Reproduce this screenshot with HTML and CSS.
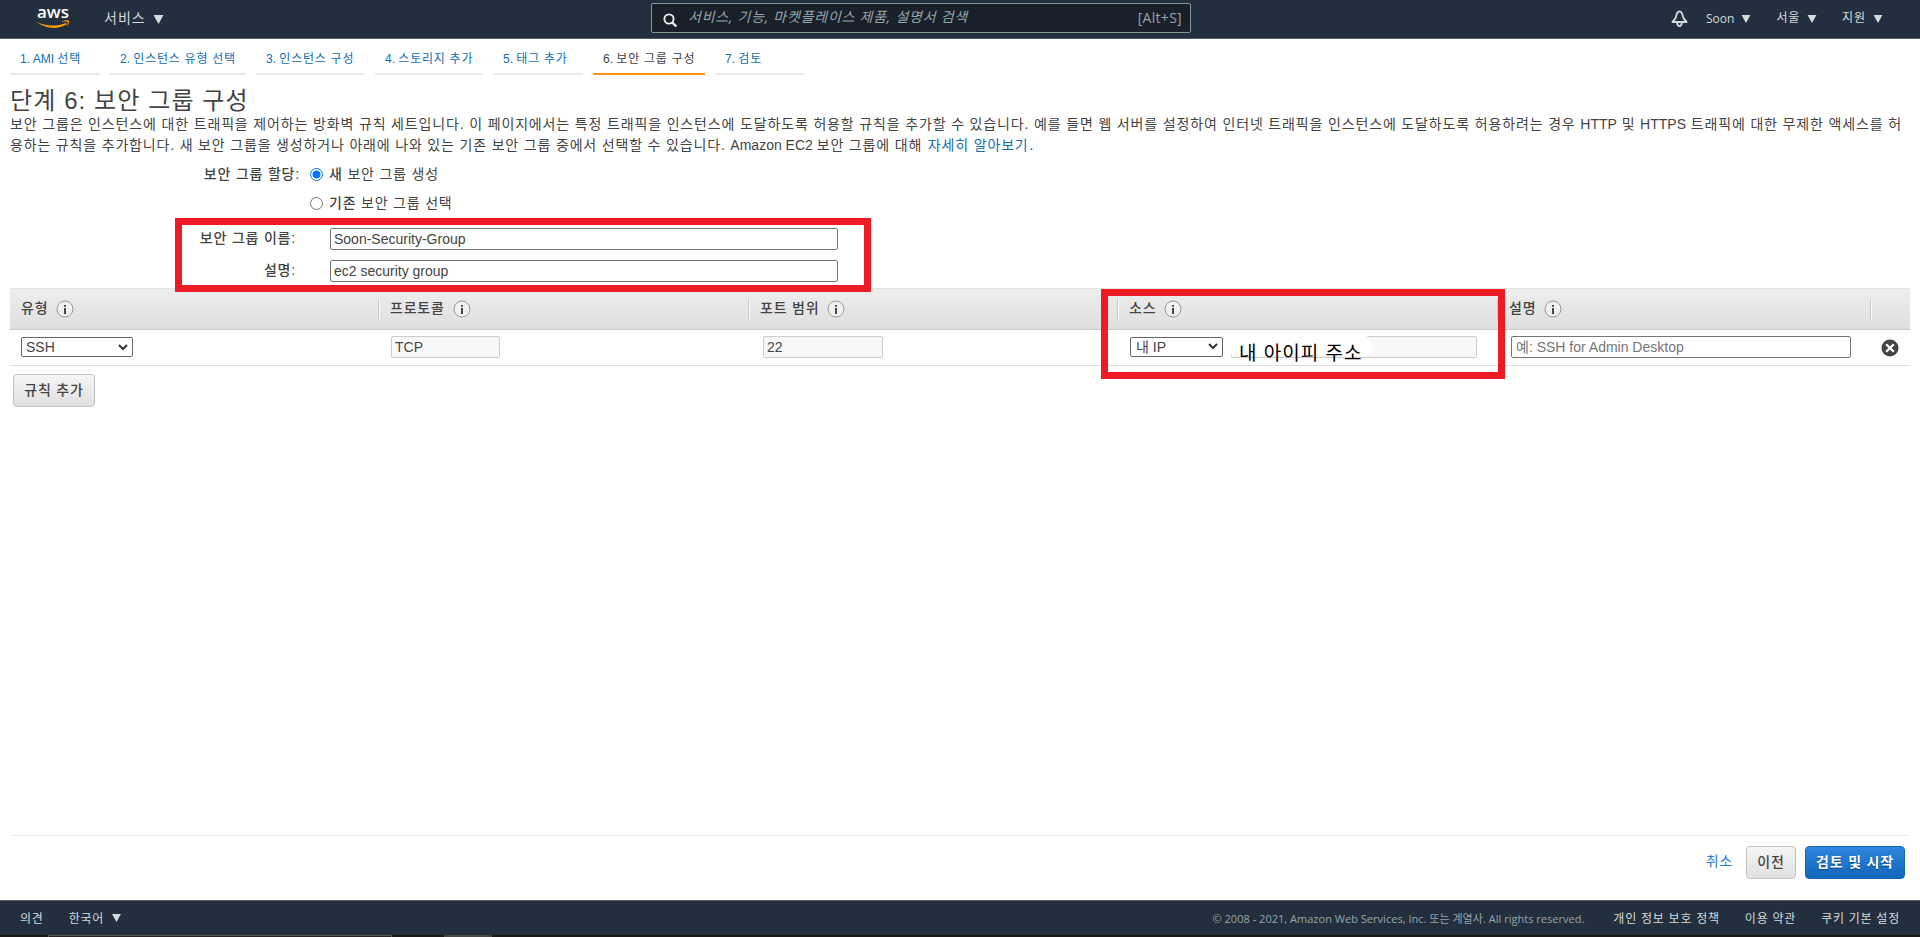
FILE: index.html
```html
<!DOCTYPE html>
<html lang="ko">
<head>
<meta charset="utf-8">
<title>보안 그룹 구성</title>
<link rel="stylesheet" href="styles.css">
</head>
<body>
<svg class="defs" aria-hidden="true">
  <symbol id="info" viewBox="0 0 18 18"><circle cx="9" cy="9" r="8" fill="#f0f0f0" stroke="#999"/><path d="M8 5h2v1.800H8zM8 8h2v6H8z" fill="#444"/></symbol>
  <symbol id="caret" viewBox="0 0 10 9"><path d="M0 0h10L5 9z" fill="currentColor"/></symbol>
  <symbol id="chevron" viewBox="0 0 10 7"><path d="M1 1l4 4 4-4" fill="none" stroke="#333" stroke-width="2"/></symbol>
</svg>
<header class="topbar">
  <div class="logo"><span class="logo-text">aws</span><svg class="smile" width="34" height="9" viewBox="0 0 34 9"><path d="M0 1.200C8 6 20 7.200 29.200 3.200 30.500 2.700 31.200 4 30 4.800 21 10 8.500 8.600 0 1.200z" fill="#f90"/><path d="M26 1.400C29 0 32.500-.1 33 .8 33.500 2 32.300 5.200 30.600 6.800 31.500 4.300 32.100 2.600 31.600 2 31 1.400 28.500 1.500 26 1.900z" fill="#f90"/></svg></div>
  <div class="services">서비스<svg width="11" height="9"><use href="#caret"/></svg></div>
  <div class="search">
    <svg class="lens" width="14" height="15" viewBox="0 0 14 15"><circle cx="6" cy="6" r="4.600" fill="none" stroke="#eee" stroke-width="1.900"/><path d="M9.200 9.500l4 4" stroke="#eee" stroke-width="2.400"/></svg>
    <span class="search-text">서비스, 기능, 마켓플레이스 제품, 설명서 검색</span><span class="shortcut">[Alt+S]</span>
  </div>
  <nav class="account">
    <svg class="bell" width="17" height="17" viewBox="0 0 17 17"><path d="M8.500 1.300C6.500 1.500 5.600 3.600 5.200 6.200 4.700 8.700 3 10 1.400 12h14.200C14 10 12.300 8.700 11.800 6.200 11.400 3.600 10.500 1.500 8.500 1.300z" fill="none" stroke="#d5dbdb" stroke-width="1.800" stroke-linejoin="round"/><path d="M6.200 12.500c0 4.700 4.600 4.700 4.600 0" fill="none" stroke="#d5dbdb" stroke-width="1.800"/></svg>
    <span class="menu soon">Soon<svg width="10" height="8"><use href="#caret"/></svg></span>
    <span class="menu">서울<svg width="10" height="8"><use href="#caret"/></svg></span>
    <span class="menu">지원<svg width="10" height="8"><use href="#caret"/></svg></span>
  </nav>
</header>
<main class="page">
  <nav class="tabs">
    <a class="tab w90"><i>1. AMI </i>선택</a><a class="tab w136"><i>2. </i>인스턴스 유형 선택</a><a class="tab w109"><i>3. </i>인스턴스 구성</a><a class="tab w108"><i>4. </i>스토리지 추가</a><a class="tab w90"><i>5. </i>태그 추가</a><a class="tab w112 active"><i>6. </i>보안 그룹 구성</a><a class="tab w90"><i>7. </i>검토</a>
  </nav>
  <h1>단계 6: 보안 그룹 구성</h1>
  <p class="intro">보안 그룹은 인스턴스에 대한 트래픽을 제어하는 방화벽 규칙 세트입니다. 이 페이지에서는 특정 트래픽을 인스턴스에 도달하도록 허용할 규칙을 추가할 수 있습니다. 예를 들면 웹 서버를 설정하여 인터넷 트래픽을 인스턴스에 도달하도록 허용하려는 경우 <i>HTTP</i> 및 <i>HTTPS</i> 트래픽에 대한 무제한 액세스를 허<br><span class="line2">용하는 규칙을 추가합니다. 새 보안 그룹을 생성하거나 아래에 나와 있는 기존 보안 그룹 중에서 선택할 수 있습니다. <i>Amazon EC2 </i>보안 그룹에 대해 <a>자세히 알아보기</a>.</span></p>
  <div class="form">
    <div class="choice"><b class="label">보안 그룹 할당:</b><span class="radio on"></span><span class="option"><b>새</b> 보안 그룹 생성</span></div>
    <div class="choice"><b class="label"></b><span class="radio"></span><span class="option"><b>기존</b> 보안 그룹 선택</span></div>
    <div class="field"><b class="label">보안 그룹 이름:</b><span class="box">Soon-Security-Group</span></div>
    <div class="field"><b class="label">설명:</b><span class="box">ec2 security group</span></div>
  </div>
  <div class="rules">
    <div class="row head">
      <b class="th">유형<svg width="18" height="18"><use href="#info"/></svg></b>
      <b class="th sep">프로토콜<svg width="18" height="18"><use href="#info"/></svg></b>
      <b class="th sep">포트 범위<svg width="18" height="18"><use href="#info"/></svg></b>
      <b class="th sep">소스<svg width="18" height="18"><use href="#info"/></svg></b>
      <b class="th sep">설명<svg width="18" height="18"><use href="#info"/></svg></b>
      <b class="th sep"></b>
    </div>
    <div class="row body">
      <div class="td type"><span class="select">SSH<svg width="10" height="7"><use href="#chevron"/></svg></span></div>
      <div class="td protocol"><span class="box off">TCP</span></div>
      <div class="td port"><span class="box off">22</span></div>
      <div class="td source"><span class="select">내 IP<svg width="10" height="7"><use href="#chevron"/></svg></span><span class="box off ip"><span class="mask">내 아이피 주소</span></span></div>
      <div class="td desc"><span class="box hint">예: SSH for Admin Desktop</span></div>
      <div class="td"><svg class="remove" width="18" height="18" viewBox="0 0 18 18"><circle cx="9" cy="9" r="8.500" fill="#444"/><path d="M5.200 5.200l7.600 7.600M12.800 5.200l-7.600 7.600" stroke="#fff" stroke-width="2.300"/></svg></div>
    </div>
  </div>
  <span class="btn add">규칙 추가</span>
  <div class="actions"><a>취소</a><span class="btn prev">이전</span><span class="btn primary">검토 및 시작</span></div>
</main>
<footer class="footer">
  <span class="feedback">의견</span><span class="lang">한국어<svg width="9" height="8"><use href="#caret"/></svg></span>
  <span class="copy">© 2008 - 2021, Amazon Web Services, Inc. 또는 계열사. All rights reserved.</span>
  <span class="f1">개인 정보 보호 정책</span><span class="f2">이용 약관</span><span class="f3">쿠키 기본 설정</span>
</footer>
<div class="strip"><span class="s1"></span><span class="s2"></span></div>
<div class="mark mark-name"></div>
<div class="mark mark-source"></div>
</body>
</html>
```
FILE: styles.css
```css
* { box-sizing: border-box; }
body {
  margin: 0;
  height: 937px;
  display: flex;
  flex-direction: column;
  overflow: hidden;
  position: relative;
  background: #fff;
  color: #444;
  font: 14px "Liberation Sans", "Noto Sans CJK KR", sans-serif;
  letter-spacing: .8px;
  white-space: nowrap;
}
.defs { position: absolute; width: 0; height: 0; }
svg { flex: none; display: block; }
i { font-style: normal; letter-spacing: 0; white-space: pre; }
b { font-weight: 500; }
a { color: #146eb4; }

.topbar {
  height: 39px;
  flex: none;
  display: flex;
  align-items: center;
  background: #232f3e;
  border-bottom: 1px solid #545b64;
  color: #d5dbdb;
  font-family: "Open Sans", "Noto Sans CJK KR", sans-serif;
}
.logo { width: 68px; height: 38px; margin-left: 36px; padding-top: 3px; }
.logo-text { display: block; height: 17px; padding-left: 1px; font: 600 17px/17px "Open Sans", sans-serif; letter-spacing: 0; color: #fff; }
.services { width: 547px; display: flex; align-items: center; gap: 7px; padding-bottom: 4px; letter-spacing: 1px; }
.services svg { margin-top: 4px; }
.search {
  width: 540px;
  height: 30px;
  margin-bottom: 2px;
  padding: 0 8px 0 11px;
  display: flex;
  align-items: center;
  background: #1a202a;
  border: 1px solid #879596;
  border-radius: 2px;
  color: #95a5a6;
}
.lens { margin-top: 5px; }
.search-text { margin: -4px 0 0 11px; font-style: italic; letter-spacing: .75px; }
.shortcut { margin: -1px 0 0 auto; font-size: 14px; letter-spacing: .3px; }
.account { margin-left: 480px; display: flex; align-items: center; font-size: 12px; }
.bell { margin: -2px 18px 0 0; }
.menu { display: flex; align-items: center; gap: 7px; margin: -4px 25px 0 0; letter-spacing: .8px; }
.menu svg { margin-top: 3px; }
.soon { letter-spacing: 0; margin-top: -2px; }
.soon svg { margin-top: 1px; }

.page { flex: 1; padding: 0 10px; display: flex; flex-direction: column; }
.tabs { display: flex; gap: 10px; height: 36px; flex: none; font-size: 12px; letter-spacing: .75px; }
.tab { padding-left: 10px; line-height: 41px; height: 36px; border-bottom: 2px solid #eaeaea; }
.tab.active { color: #444; border-color: #ff9114; }
.w90 { width: 90px; }
.w108 { width: 108px; }
.w109 { width: 109px; }
.w112 { width: 112px; }
.w136 { width: 136px; }
h1 { height: 39px; margin: 0; font-size: 24px; font-weight: 400; line-height: 52px; letter-spacing: 1.1px; }
.intro { height: 42px; margin: 0; line-height: 21px; letter-spacing: .848px; }
.line2 { letter-spacing: .83px; }
.intro a { margin: 0 1px; }
.form { height: 131px; padding-top: 4px; }
.choice { height: 29px; display: flex; align-items: center; }
.choice .label { width: 290px; padding-bottom: 3px; }
.option { padding-bottom: 3px; }
.label { width: 286px; text-align: right; }
.radio { width: 13px; height: 13px; margin: -1px 6px 0 10px; border: 1px solid #767676; border-radius: 50%; background: #fff; }
.radio.on { border-color: #0075ff; background: radial-gradient(circle, #0075ff 0 3.700px, #fff 4.300px); }
.field { height: 32px; margin-top: 5px; display: flex; align-items: center; }
.field + .field { margin-top: 0; }
.field .label { padding-bottom: 4px; }
.field .box { width: 508px; margin-left: 34px; }
.box {
  height: 22px;
  display: flex;
  align-items: center;
  padding-left: 3px;
  background: #fff;
  border: 1px solid #767676;
  border-radius: 2px;
  letter-spacing: 0;
}
.box.off { background: #f8f8f8; border-color: #ccc; }
.box.hint { color: #757575; padding: 0 0 2px 4px; }

.rules { margin-top: 1px; }
.row { display: grid; grid-template-columns: 368px 370px 369px 380px 373px 40px; }
.head { height: 42px; background: linear-gradient(#eee, #dfdfdf); border-top: 1px solid #e4e4e4; border-bottom: 1px solid #c9c9c9; }
.th { height: 20px; margin-top: 10px; padding: 0 0 3px 11px; display: flex; align-items: center; gap: 8px; line-height: 18px; }
.th svg { margin-top: 2px; }
.sep { border-left: 1px solid #c8c8c8; box-shadow: inset 1px 0 #fafafa; }
.body { height: 36px; border-bottom: 1px solid #ddd; }
.td { display: flex; align-items: center; padding: 0 0 1px 11px; }
.select { width: 112px; height: 20px; padding: 0 4px; display: flex; align-items: center; justify-content: space-between; border: 1px solid #666; border-radius: 2px; letter-spacing: 0; }
.protocol { padding-left: 13px; }
.protocol .box { width: 109px; }
.port { padding-left: 15px; }
.port .box { width: 120px; }
.source { padding-left: 13px; }
.source .select { width: 93px; padding: 0 4px 2px 5px; }
.ip { width: 246px; margin-left: 8px; padding: 0; align-items: flex-start; }
.mask { width: 141px; height: 22px; margin: -3px 0 0 -1px; padding-left: 8px; border-radius: 0 12px 8px 3px; background: #fff; color: #000; font-size: 19px; line-height: 40px; letter-spacing: 1px; }
.desc { padding-left: 14px; }
.desc .box { width: 340px; }
.remove { margin-top: 2px; }
.btn {
  height: 33px;
  display: flex;
  align-items: center;
  justify-content: center;
  padding-bottom: 4px;
  border: 1px solid #c2c2c2;
  border-radius: 4px;
  background: linear-gradient(#f5f5f5, #e1e1e1);
  font-weight: 500;
}
.add { width: 82px; margin: 8px 0 0 3px; }
.actions { height: 65px; margin-top: auto; padding: 10px 5px 0 0; display: flex; justify-content: flex-end; border-top: 1px solid #eaeaea; }
.actions a { margin: 4px 13px 0 0; color: #2a7bd3; }
.prev { width: 50px; }
.primary { width: 100px; margin-left: 9px; border-color: #1166bb; background: linear-gradient(#2e86de, #1166bb); color: #fff; font-weight: 700; text-shadow: 0 1px 1px #0a4480; }

.footer {
  height: 35px;
  flex: none;
  padding: 0 20px 1px;
  display: flex;
  align-items: center;
  background: #232f3e;
  border-top: 1px solid #545b64;
  color: #d5dbdb;
  font: 12px "Open Sans", "Noto Sans CJK KR", sans-serif;
  letter-spacing: .8px;
}
.lang { display: flex; align-items: center; gap: 8px; margin-left: 25px; }
.copy { margin-left: auto; font-size: 11px; letter-spacing: .02px; color: #95a5a6; }
.f1 { margin-left: 29px; }
.f2, .f3 { margin-left: 25px; }
.strip { height: 2px; flex: none; display: flex; background: #1c1819; }
.s1 { width: 344px; margin-left: 48px; background: #2b2224; border: solid #5a5657; border-width: 1px 1px 0; }
.s2 { width: 48px; margin-left: 52px; background: #4a4748; }

/* Highlight frames drawn over the form */
.mark { position: absolute; border: 7px solid #ed1c24; }
.mark-name { left: 175px; top: 218px; width: 696px; height: 74px; }
.mark-source { left: 1101px; top: 289px; width: 404px; height: 90px; }
```
